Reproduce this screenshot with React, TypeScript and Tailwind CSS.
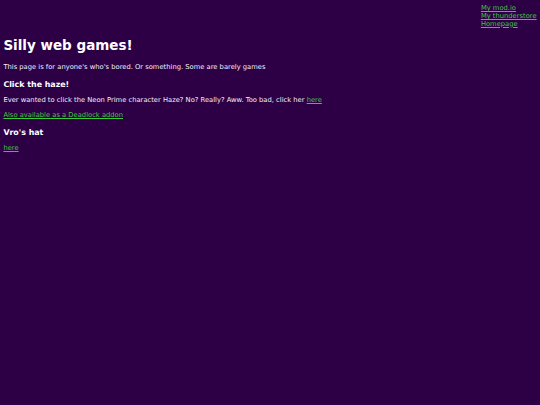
// Silly web games — a plain dark-purple page with a few links.
// Sizes are the browser defaults at 0.421875 scale (1280 → 540).

const LINK = "text-[#3cc83c] underline";

export default function App() {
  return (
    <div
      className="min-h-[405px] bg-[#2d0046] px-[3.375px] pt-[5px] pb-[3.375px] text-[6.75px] leading-[7.9px] text-[#f4eef8]"
      style={{ fontFamily: '"DejaVu Sans", Verdana, sans-serif' }}
    >
      <div className="flex justify-end">
        <div className="flex flex-col">
          <a className={LINK}>My mod.io</a>
          <a className={LINK}>My thunderstore</a>
          <a className={LINK}>Homepage</a>
        </div>
      </div>

      <h1 className="mt-[9px] mb-[11px] text-[13.5px] leading-[15.7px] font-bold text-white">Silly web games!</h1>
      <p className="my-[6.75px]">This page is for anyone's who's bored. Or something. Some are barely games</p>

      <h3 className="my-[7.9px] text-[7.9px] leading-[9.2px] font-bold text-white">Click the haze!</h3>
      <p className="my-[6.75px]">
        Ever wanted to click the Neon Prime character Haze? No? Really? Aww. Too bad, click her{" "}
        <a className={LINK}>here</a>
      </p>
      <p className="my-[6.75px]">
        <a className={LINK}>Also available as a Deadlock addon</a>
      </p>

      <h3 className="my-[7.9px] text-[7.9px] leading-[9.2px] font-bold text-white">Vro's hat</h3>
      <p className="mt-[7.9px] mb-[6.75px]">
        <a className={LINK}>here</a>
      </p>
    </div>
  );
}
